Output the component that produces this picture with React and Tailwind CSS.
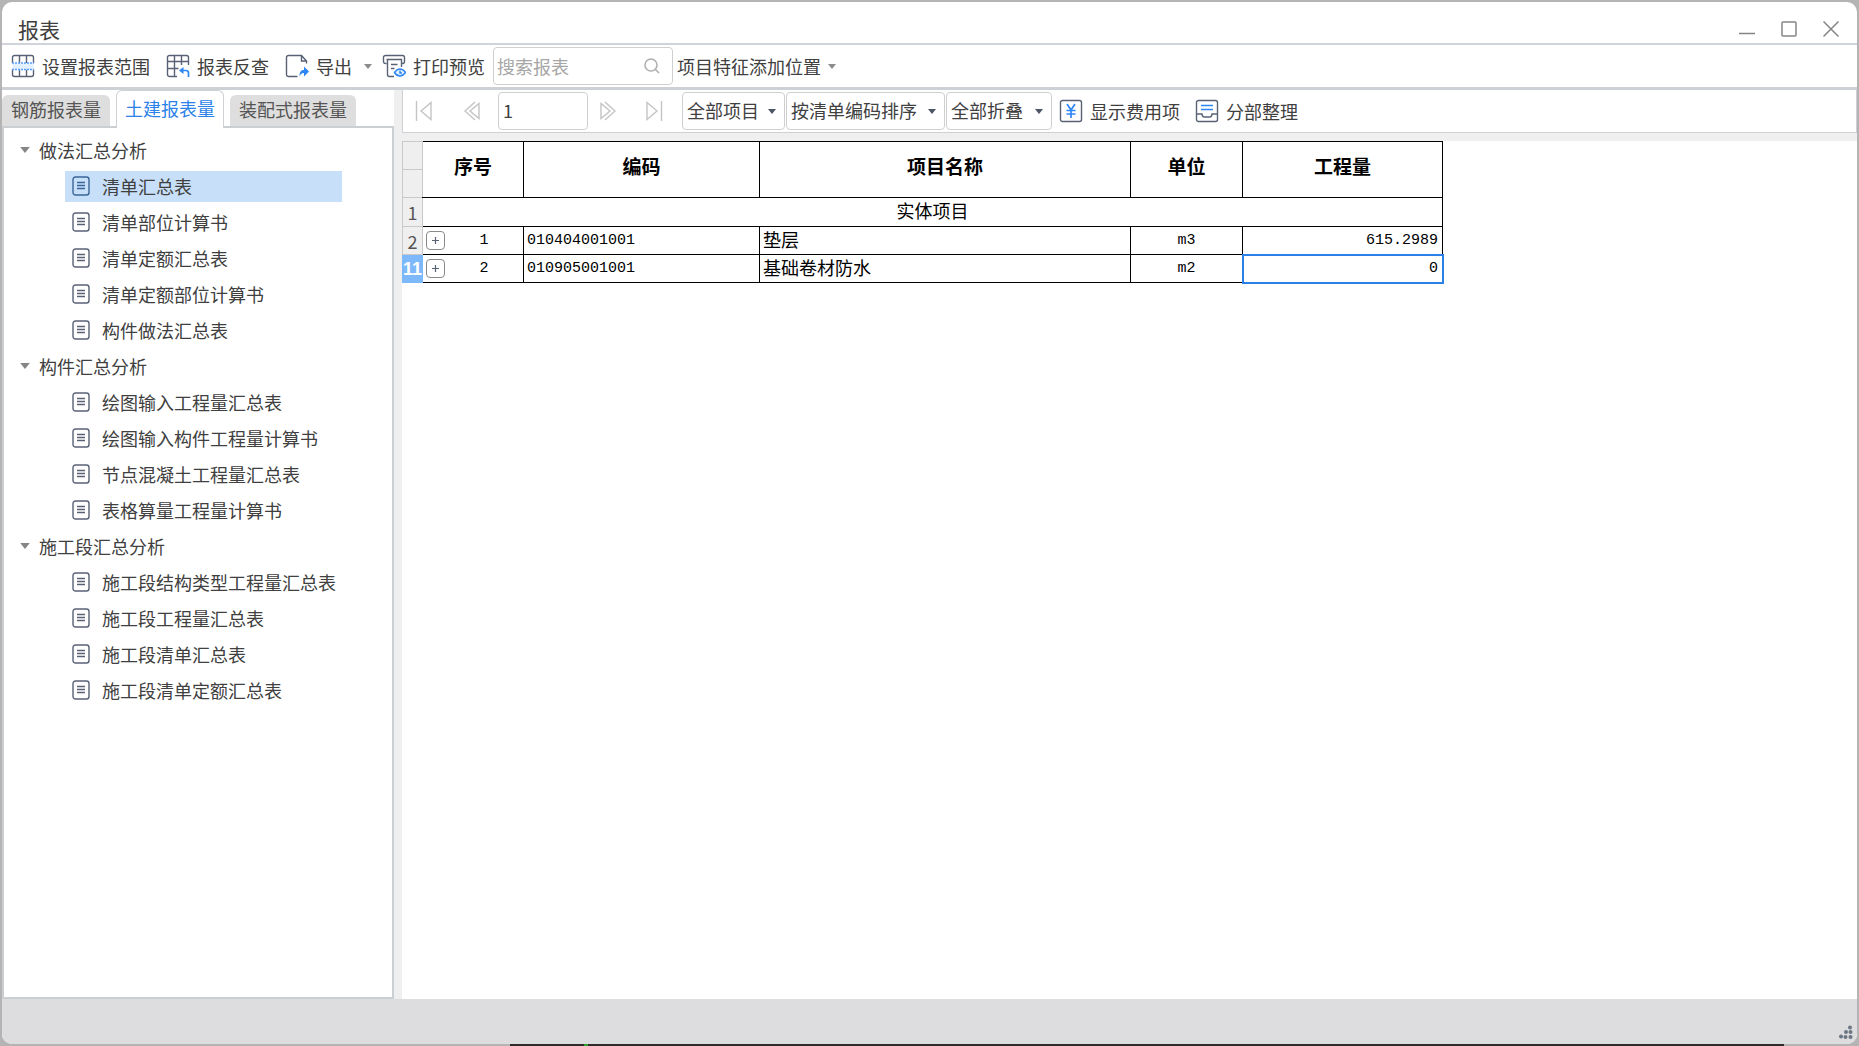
import { useState } from "react";

const GROUPS = [
  {
    name: "做法汇总分析",
    items: ["清单汇总表", "清单部位计算书", "清单定额汇总表", "清单定额部位计算书", "构件做法汇总表"],
  },
  {
    name: "构件汇总分析",
    items: ["绘图输入工程量汇总表", "绘图输入构件工程量计算书", "节点混凝土工程量汇总表", "表格算量工程量计算书"],
  },
  {
    name: "施工段汇总分析",
    items: ["施工段结构类型工程量汇总表", "施工段工程量汇总表", "施工段清单汇总表", "施工段清单定额汇总表"],
  },
];

const TABS = ["钢筋报表量", "土建报表量", "装配式报表量"];

const COLUMNS = ["序号", "编码", "项目名称", "单位", "工程量"];

const ROWS = [
  { line: 2, no: 1, code: "010404001001", name: "垫层", unit: "m3", amount: "615.2989" },
  { line: 11, no: 2, code: "010905001001", name: "基础卷材防水", unit: "m2", amount: "0" },
];

const Caret = ({ className }) => (
  <svg viewBox="0 0 8 5" className={`shrink-0 ${className}`} aria-hidden="true">
    <path d="M0 0h8L4 5z" fill="currentColor" />
  </svg>
);

const RangeIcon = () => (
  <svg viewBox="0 0 24 24" className="h-6 w-6 shrink-0" fill="none" stroke="#596275" strokeWidth="1.4">
    <path d="M1.5 9V3.5a2 2 0 0 1 2-2h17a2 2 0 0 1 2 2V9M1.5 15.5v5a2 2 0 0 0 2 2h17a2 2 0 0 0 2-2v-5M8.5 1.5V9M15.5 1.5V9M8.5 15.5v7M15.5 15.5v7" />
    <path d="M1.5 9v6.5h21V9" fill="#e3f0ff" stroke="none" />
    <path d="M1 9h22M1 15.5h22" stroke="#5a9ff7" strokeDasharray="2 1" />
  </svg>
);

const TraceIcon = () => (
  <svg viewBox="0 0 24 24" className="h-6 w-6 shrink-0" fill="none" stroke="#596275" strokeWidth="1.4">
    <path d="M11 22.5H3.5a2 2 0 0 1-2-2v-17a2 2 0 0 1 2-2h17a2 2 0 0 1 2 2V11M1.5 7.5h21M1.5 14.5h11M8.5 1.5v21M15.5 1.5V11" />
    <path d="M17.500 13v7l-4.500-3.500z" fill="#2e86f5" stroke="none" />
    <path d="M16 16.5h4q2.500 0 2.500 2.500v4" stroke="#2e86f5" strokeWidth="1.7" />
  </svg>
);

const ExportIcon = () => (
  <svg viewBox="0 0 24 24" className="h-6 w-6 shrink-0" fill="none" stroke="#596275" strokeWidth="1.4">
    <path d="M12.5 22.5h-9a2 2 0 0 1-2-2v-17a2 2 0 0 1 2-2h13l5 5.5v2.500M16.500 1.5V7h5" />
    <path d="M14.500 22.500c0-5 1.5-6.500 4.500-6.500v-3.500l5 5-5 5V19c-2 0-3.500.5-4.500 3.500z" fill="#2e86f5" stroke="none" />
  </svg>
);

const PreviewIcon = () => (
  <svg viewBox="0 0 24 24" className="h-6 w-6 shrink-0" fill="none" stroke="#596275" strokeWidth="1.4">
    <path d="M4.500 9.500h-1a2 2 0 0 1-2-2v-4a2 2 0 0 1 2-2h17a2 2 0 0 1 2 2v4a2 2 0 0 1-2 2h-1M4.500 5.500h15V13M5.500 5.500v15a2 2 0 0 0 2 2H12M9 10.500h6.500M9 14.500h3.500" />
    <path d="M12.500 18.500c3-4.700 8-4.700 11 0-3 4.700-8 4.700-11 0z" fill="#e4f0ff" stroke="#2e86f5" />
    <path d="M18 16.500v2.500h2" stroke="#2e86f5" />
  </svg>
);

const YuanIcon = () => (
  <svg viewBox="0 0 24 24" className="h-6 w-6 shrink-0" fill="none">
    <rect x="1.500" y="1.500" width="21" height="21" rx="2" stroke="#596275" strokeWidth="1.4" />
    <path d="M8 5l4 6 4-6M12 11v8M7.500 11.500h9M7.500 15h9" stroke="#2e86f5" strokeWidth="1.7" />
  </svg>
);

const TidyIcon = () => (
  <svg viewBox="0 0 24 24" className="h-6 w-6 shrink-0" fill="none" stroke="#596275" strokeWidth="1.4">
    <rect x="1.500" y="1.500" width="21" height="21" rx="2" />
    <path d="M1.500 15H7q0 3 2.500 3h5q2.500 0 2.500-3h5.500" />
    <path d="M6 6.500h12M6 10.500h12" stroke="#2e86f5" strokeWidth="1.7" />
  </svg>
);

const ReportIcon = ({ active }) => (
  <svg
    viewBox="0 0 18 20"
    className="h-5 w-[18px] shrink-0"
    fill="none"
    stroke={active ? "#3b6597" : "#596275"}
    strokeWidth="1.4"
  >
    <rect x="1" y="1" width="16" height="18" rx="2.5" />
    <path d="M5 6.500h8M5 9.500h8M5 12.500h8" />
  </svg>
);

const ToolButton = ({ icon, children }) => (
  <button className="flex items-center gap-[7px] whitespace-nowrap">
    {icon}
    {children}
  </button>
);

const PageButton = ({ label, d }) => (
  <button aria-label={label} className="flex w-[18px] justify-center">
    <svg viewBox="0 0 18 20" className="h-5 w-[18px]" fill="none" stroke="#c4c4c4" strokeWidth="1.4">
      <path d={d} />
    </svg>
  </button>
);

const Combo = ({ label, options, className }) => (
  <div className={`relative flex h-[38px] items-center rounded border border-[#cfcfcf] ${className}`}>
    <select aria-label={label} className="h-full w-full appearance-none pb-0.5 pl-1 outline-none">
      {options.map((option) => (
        <option key={option}>{option}</option>
      ))}
    </select>
    <Caret className="pointer-events-none absolute right-2 h-[5px] w-2 text-[#4b5563]" />
  </div>
);

const TitleBar = () => (
  <header className="flex h-[43px] shrink-0 items-center justify-between border-b-2 border-[#d0d4d8] pr-[18px] pl-4">
    <h1 className="pt-3 text-[21px] leading-7">报表</h1>
    <div className="flex items-center gap-[26px] pt-3 text-[#858585]">
      <button aria-label="最小化">
        <svg viewBox="0 0 16 16" className="h-4 w-4" fill="none" stroke="currentColor" strokeWidth="1.4">
          <path d="M0 12.500h16" />
        </svg>
      </button>
      <button aria-label="最大化">
        <svg viewBox="0 0 16 16" className="h-4 w-4" fill="none" stroke="currentColor" strokeWidth="1.5">
          <rect x="1" y="1" width="14" height="14" rx="1" />
        </svg>
      </button>
      <button aria-label="关闭">
        <svg viewBox="0 0 16 16" className="h-4 w-4" fill="none" stroke="currentColor" strokeWidth="1.5">
          <path d="M.5.5l15 15M15.500.5l-15 15" />
        </svg>
      </button>
    </div>
  </header>
);

const Toolbar = () => (
  <div className="flex h-[45px] shrink-0 items-center border-b-3 border-[#cdd0d4] pl-[9px]">
    <div className="flex items-center gap-4">
      <ToolButton icon={<RangeIcon />}>设置报表范围</ToolButton>
      <ToolButton icon={<TraceIcon />}>报表反查</ToolButton>
      <button className="flex items-center gap-[7px]">
        <ExportIcon />
        导出
        <Caret className="ml-[5px] h-[5px] w-2 text-[#8c8c8c]" />
      </button>
    </div>
    <div className="ml-2.5">
      <ToolButton icon={<PreviewIcon />}>打印预览</ToolButton>
    </div>
    <label className="ml-2 flex h-[38px] w-[180px] items-center rounded border border-[#cfcfcf] pr-3 pl-[3px]">
      <input
        type="text"
        aria-label="搜索报表"
        placeholder="搜索报表"
        className="min-w-0 flex-1 outline-none placeholder:text-[#a6a6a6]"
      />
      <svg viewBox="0 0 16 16" className="h-4 w-4" fill="none" stroke="#b0b0b0" strokeWidth="1.6">
        <circle cx="7" cy="7" r="6" />
        <path d="M11.500 11.500l3.500 3.500" />
      </svg>
    </label>
    <button className="ml-1 flex items-center gap-[7px] whitespace-nowrap">
      项目特征添加位置
      <Caret className="h-[5px] w-2 text-[#8c8c8c]" />
    </button>
  </div>
);

const Sidebar = () => {
  const [tab, setTab] = useState("土建报表量");
  const [selected, setSelected] = useState("清单汇总表");

  return (
    <aside className="flex w-[392px] shrink-0 flex-col">
      <div className="flex h-9 shrink-0 items-end gap-1.5">
        {TABS.map((name) => (
          <button
            key={name}
            onClick={() => setTab(name)}
            className={
              tab === name
                ? "relative -mb-0.5 h-[38px] rounded-t-md border border-b-0 border-[#cdd0d4] bg-white px-2 pb-1 text-[#2b82e8]"
                : "h-[31px] rounded-t-md bg-[#dedede] px-[9px] pb-1 text-[#555]"
            }
          >
            {name}
          </button>
        ))}
      </div>
      <nav className="flex-1 border-2 border-[#cbcfd2] pt-1">
        {GROUPS.map((group) => (
          <section key={group.name}>
            <h2 className="flex h-9 items-center gap-[9px] pl-4">
              <Caret className="h-[6px] w-[10px] text-[#858585]" />
              {group.name}
            </h2>
            <ul>
              {group.items.map((item) => (
                <li key={item} className="flex h-9 items-center pl-[61px]">
                  <button
                    onClick={() => setSelected(item)}
                    className={`flex h-[31px] w-[277px] items-center gap-3 pl-[7px] text-left whitespace-nowrap ${
                      selected === item ? "bg-[#c7dff9]" : ""
                    }`}
                  >
                    <ReportIcon active={selected === item} />
                    {item}
                  </button>
                </li>
              ))}
            </ul>
          </section>
        ))}
      </nav>
    </aside>
  );
};

const PageBar = () => (
  <div className="flex h-[43px] shrink-0 items-center border border-t-0 border-[#cdd0d4] bg-white pl-3">
    <div className="flex items-center gap-[30px]">
      <PageButton label="首页" d="M1.5 0v20M16 1.500v17L6 10z" />
      <PageButton label="上一页" d="M12 1L2 10l10 9M16 2.500v15L7 10z" />
    </div>
    <input
      type="text"
      aria-label="页码"
      defaultValue="1"
      className="mr-[11px] ml-[17px] h-[38px] w-[90px] rounded border border-[#cfcfcf] px-1 pb-0.5 outline-none"
    />
    <div className="flex items-center gap-[28px]">
      <PageButton label="下一页" d="M6 1l10 9-10 9M2 2.500v15L11 10z" />
      <PageButton label="末页" d="M16.500 0v20M2 1.500v17L12 10z" />
    </div>
    <div className="ml-[19px] flex gap-px">
      <Combo label="项目范围" options={["全部项目"]} className="w-[103px]" />
      <Combo label="排序方式" options={["按清单编码排序"]} className="w-[159px]" />
      <Combo label="折叠方式" options={["全部折叠"]} className="w-[106px]" />
    </div>
    <div className="ml-[7px] flex gap-[15px]">
      <ToolButton icon={<YuanIcon />}>显示费用项</ToolButton>
      <ToolButton icon={<TidyIcon />}>分部整理</ToolButton>
    </div>
  </div>
);

const ReportTable = () => (
  <table className="w-[1040px] table-fixed border-collapse leading-5 text-black">
    <colgroup>
      <col className="w-5" />
      <col className="w-[101px]" />
      <col className="w-[236px]" />
      <col className="w-[371px]" />
      <col className="w-[112px]" />
      <col className="w-[200px]" />
    </colgroup>
    <thead>
      <tr className="h-7">
        <td className="border border-[#c9c9c9] bg-[#efefef]" />
        {COLUMNS.map((column) => (
          <th
            key={column}
            rowSpan={2}
            className="border border-black pb-2 text-[19px] font-bold first-of-type:border-l-[#c9c9c9]"
          >
            {column}
          </th>
        ))}
      </tr>
      <tr className="h-7">
        <td className="border border-[#c9c9c9] bg-[#efefef]" />
      </tr>
    </thead>
    <tbody>
      <tr className="h-[29px]">
        <th className="border border-[#c9c9c9] bg-[#efefef] font-normal text-[#555]">1</th>
        <td colSpan={5} className="border border-black border-l-[#c9c9c9] pb-1 text-center">
          实体项目
        </td>
      </tr>
      {ROWS.map((row) => (
        <tr key={row.line} className="h-7">
          <th
            className={
              row.line === 11
                ? "border border-[#7db9fa] bg-[#7db9fa] p-0 font-['Liberation_Sans'] font-bold text-white"
                : "border border-[#c9c9c9] bg-[#efefef] p-0 font-normal text-[#555]"
            }
          >
            {row.line}
          </th>
          <td className="border border-black border-l-[#c9c9c9]">
            <div className="flex items-center pl-[3px]">
              <button
                aria-label="展开"
                className="flex h-[19px] w-[19px] items-center justify-center rounded border border-[#8a8a8a]"
              >
                <svg viewBox="0 0 9 9" className="h-[9px] w-[9px]" stroke="#596275" strokeWidth="1.2">
                  <path d="M4.500 1v7M1 4.500h7" />
                </svg>
              </button>
              <span className="flex-1 text-center font-['Liberation_Mono'] text-[15px] leading-5">{row.no}</span>
            </div>
          </td>
          <td className="border border-black pl-[3px] font-['Liberation_Mono'] text-[15px] leading-5">{row.code}</td>
          <td className="border border-black pb-1 pl-[3px]">{row.name}</td>
          <td className="border border-black text-center font-['Liberation_Mono'] text-[15px] leading-5">{row.unit}</td>
          <td
            className={`border border-black pr-1 text-right font-['Liberation_Mono'] text-[15px] leading-5 ${
              row.line === 11 ? "outline-2 -outline-offset-1 outline-[#2a80e8]" : ""
            }`}
          >
            {row.amount}
          </td>
        </tr>
      ))}
    </tbody>
  </table>
);

const App = () => {
  return (
    <div className="flex min-h-screen flex-col bg-[#b4b4b4] px-0.5 pt-0.5 font-['Noto_Sans_CJK_SC',sans-serif] text-[18px] leading-6 text-[#404040]">
      <div className="flex flex-1 flex-col overflow-hidden rounded-[10px] bg-white">
        <TitleBar />
        <Toolbar />
        <div className="flex flex-1">
          <Sidebar />
          <div className="w-2 shrink-0 bg-[#efefef]" />
          <main className="flex min-w-0 flex-1 flex-col bg-[#efefef]">
            <PageBar />
            <div className="mt-2 flex-1 overflow-auto bg-white">
              <ReportTable />
            </div>
          </main>
        </div>
        <footer className="flex h-[45px] shrink-0 items-end justify-end bg-[#dddddf] pr-1 pb-1">
          <svg viewBox="0 0 15 15" className="h-[15px] w-[15px]" fill="#6d7783">
            <circle cx="12" cy="2.500" r="2" />
            <circle cx="8" cy="7" r="2" />
            <circle cx="12.500" cy="7" r="2" />
            <circle cx="3" cy="11.500" r="2" />
            <circle cx="7.500" cy="12" r="2" />
            <circle cx="12.500" cy="12" r="2" />
          </svg>
        </footer>
      </div>
      <div className="mr-[73px] ml-[508px] h-0.5 bg-[#2e2a2e] pl-[74px]">
        <div className="h-0.5 w-1 bg-[#2ca02c]" />
      </div>
    </div>
  );
};

export default App;
